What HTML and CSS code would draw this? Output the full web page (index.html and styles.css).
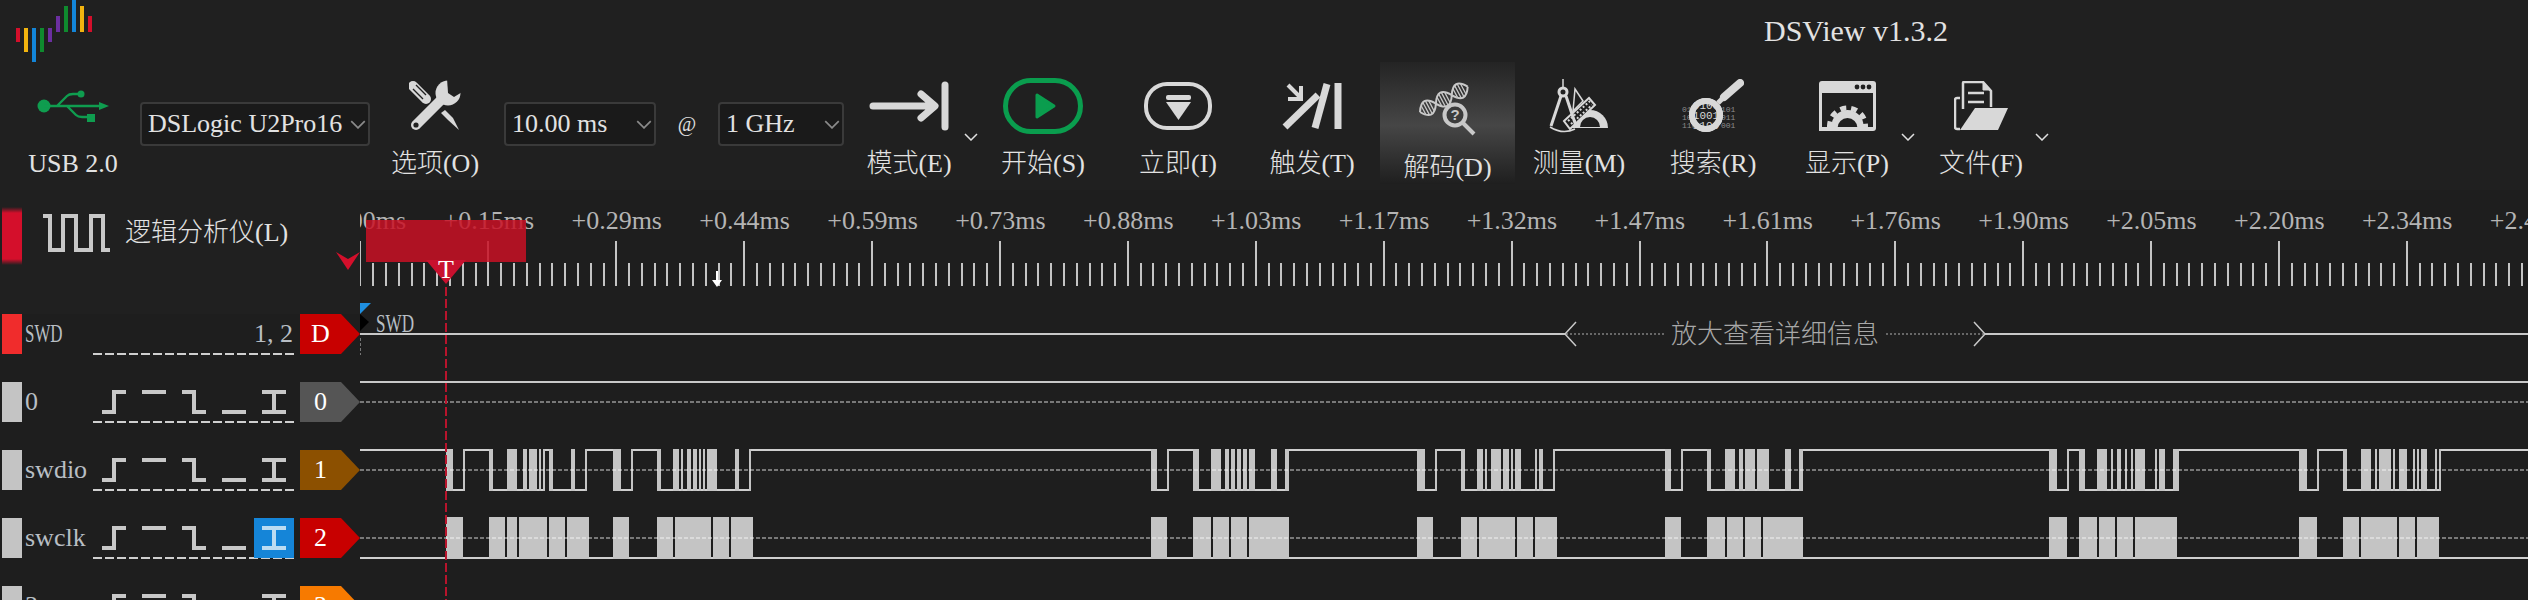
FILE: index.html
```html
<!DOCTYPE html>
<html lang="zh-CN">
<head>
  <meta charset="UTF-8">
  <title>DSView v1.3.2</title>
  <link rel="stylesheet" href="styles.css">
</head>
<body>
  <svg class="defs" width="0" height="0">
    <symbol id="trigRise" viewBox="0 0 24 24"><path d="M0 22H12V2H24"/></symbol>
    <symbol id="trigHigh" viewBox="0 0 24 24"><path d="M0 2H24"/></symbol>
    <symbol id="trigFall" viewBox="0 0 24 24"><path d="M0 2H12V22H24"/></symbol>
    <symbol id="trigLow" viewBox="0 0 24 24"><path d="M0 22H24"/></symbol>
    <symbol id="trigBoth" viewBox="0 0 24 24"><path d="M0 2H24M0 22H24M12 2V22"/></symbol>
    <symbol id="chevron" viewBox="0 0 14 8"><path d="M1 1L7 7L13 1"/></symbol>
  </svg>

  <header class="titlebar">
    <svg class="logo" width="76" height="62" viewBox="0 0 76 62">
      <rect x="0" y="28" width="4" height="14" fill="#d40f2b"/>
      <rect x="8" y="28" width="4" height="24" fill="#f2b40f"/>
      <rect x="16" y="28" width="4" height="34" fill="#1385d8"/>
      <rect x="24" y="28" width="4" height="24" fill="#0f8a2e"/>
      <rect x="32" y="28" width="4" height="14" fill="#6b2fa0"/>
      <rect x="40" y="16" width="4" height="16" fill="#6b2fa0"/>
      <rect x="48" y="6" width="4" height="26" fill="#0f8a2e"/>
      <rect x="56" y="0" width="4" height="32" fill="#1385d8"/>
      <rect x="64" y="6" width="4" height="26" fill="#f2b40f"/>
      <rect x="72" y="16" width="4" height="16" fill="#d40f2b"/>
    </svg>
    <h1 class="app-title">DSView v1.3.2</h1>
  </header>

  <nav class="toolbar">
    <div class="tool">
      <div class="tool-icon">
        <svg width="72" height="36" viewBox="0 0 72 36">
          <g fill="#0f9d4f">
            <circle cx="7" cy="18" r="6.5"/>
            <circle cx="44" cy="6" r="3.5"/>
            <rect x="50" y="26" width="8" height="8"/>
            <path d="M62 14L72 18L62 22Z"/>
          </g>
          <path d="M7 18H64M20 18L30 8Q32 6 36 6H44M30 18L39 27Q41 29 45 29H52" fill="none" stroke="#0f9d4f" stroke-width="2.4"/>
        </svg>
      </div>
      <span class="tool-label">USB 2.0</span>
    </div>

    <div class="combo combo-device"><span>DSLogic U2Pro16</span><svg class="combo-arrow"><use href="#chevron"/></svg></div>

    <div class="tool">
      <div class="tool-icon">
        <svg width="52" height="52" viewBox="0 0 52 52">
          <path d="M4 6L17 19" stroke="#d8d8d8" stroke-width="10" stroke-linecap="round"/>
          <path d="M4 9L14 19M7 5L17 15" stroke="#202020" stroke-width="1.4"/>
          <path d="M32 33L39 40L50 50L44 38L36 30Z" fill="#d8d8d8"/>
          <path d="M37 15L7 45" stroke="#d8d8d8" stroke-width="10" stroke-linecap="round"/>
          <circle cx="39" cy="13" r="12.5" fill="#d8d8d8"/>
          <path d="M39 13L38 -2L54 -2L53 12L45 17Z" fill="#202020"/>
          <circle cx="7" cy="45" r="2.6" fill="#202020"/>
        </svg>
      </div>
      <span class="tool-label">选项(O)</span>
    </div>

    <div class="combo combo-span"><span>10.00 ms</span><svg class="combo-arrow"><use href="#chevron"/></svg></div>
    <span class="at-sign">@</span>
    <div class="combo combo-rate"><span>1 GHz</span><svg class="combo-arrow"><use href="#chevron"/></svg></div>

    <div class="tool">
      <div class="tool-icon">
        <svg width="84" height="52" viewBox="0 0 84 52" fill="none" stroke="#d8d8d8" stroke-linecap="round" stroke-linejoin="round">
          <path d="M6 26H66M54 14L68 26L54 38" stroke-width="7"/>
          <path d="M78 5V47" stroke-width="7"/>
        </svg>
      </div>
      <span class="tool-label">模式(E)</span>
      <svg class="more"><use href="#chevron"/></svg>
    </div>

    <div class="tool">
      <div class="tool-icon">
        <svg width="80" height="56" viewBox="0 0 80 56">
          <rect x="2.5" y="2.5" width="75" height="51" rx="25.5" fill="none" stroke="#0a9d4e" stroke-width="5"/>
          <path d="M34 17L51 28L34 39Z" fill="#0a9d4e" stroke="#0a9d4e" stroke-width="3" stroke-linejoin="round"/>
        </svg>
      </div>
      <span class="tool-label">开始(S)</span>
    </div>

    <div class="tool">
      <div class="tool-icon">
        <svg width="68" height="48" viewBox="0 0 68 48">
          <rect x="2" y="2" width="64" height="44" rx="21" fill="none" stroke="#d8d8d8" stroke-width="4"/>
          <rect x="22" y="13" width="25" height="5" rx="2" fill="#d8d8d8"/>
          <path d="M22 20H47L34.500 38Z" fill="#d8d8d8"/>
        </svg>
      </div>
      <span class="tool-label">立即(I)</span>
    </div>

    <div class="tool">
      <div class="tool-icon">
        <svg width="60" height="48" viewBox="0 0 60 48" fill="none" stroke="#d8d8d8">
          <path d="M36 13L3 45" stroke-width="7"/>
          <path d="M45 2L33 46" stroke-width="7"/>
          <path d="M56 1V47" stroke-width="7"/>
          <path d="M6 3L18 15" stroke-width="4"/>
          <path d="M19 4V17H6" stroke-width="4"/>
        </svg>
      </div>
      <span class="tool-label">触发(T)</span>
    </div>

    <div class="tool tool-active">
      <div class="tool-icon">
        <svg width="58" height="56" viewBox="0 0 58 56" fill="none" stroke="#c8c8c8">
          <g transform="translate(1 32) rotate(-28)">
            <path d="M0 0Q9 -15 18 0T36 0T54 0M0 0Q9 15 18 0T36 0T54 0" stroke-width="2"/>
            <path d="M4 -5V5M7 -7V7M10 -7V7M13 -6V6M22 -5V5M25 -7V7M28 -7V7M31 -6V6M40 -5V5M43 -7V7M46 -7V7M49 -6V6" stroke-width="1.300"/>
          </g>
          <circle cx="36" cy="35" r="10.500" fill="#3c3c3c" stroke-width="4"/>
          <path d="M44 43L55 54" stroke-width="4"/>
          <text class="dna-mark" x="36" y="40" text-anchor="middle">?</text>
        </svg>
      </div>
      <span class="tool-label">解码(D)</span>
    </div>

    <div class="tool">
      <div class="tool-icon">
        <svg width="60" height="54" viewBox="0 0 60 54" fill="none" stroke="#d8d8d8">
          <path d="M23 49A18 18 0 0 1 59 49Z" fill="#d8d8d8" stroke="none"/>
          <path d="M31 48A10 10 0 0 1 51 48Z" fill="#202020" stroke="none"/>
          <path d="M15 42L40 19L46 26L21 50Z" fill="#202020" stroke-width="2"/>
          <path d="M19 42L41 22M22 45L43 26" stroke-width="2" stroke-dasharray="2 2"/>
          <path d="M26 10L34 22L24 32Z" stroke-width="1.500"/>
          <path d="M14 0V8" stroke-width="1.500"/>
          <circle cx="14" cy="13" r="4" stroke-width="3"/>
          <path d="M12 17L2 47M17 17L27 47" stroke-width="3"/>
          <path d="M1 48Q14 56 26 50" stroke-width="1.500"/>
        </svg>
      </div>
      <span class="tool-label">测量(M)</span>
    </div>

    <div class="tool">
      <div class="tool-icon">
        <svg width="62" height="54" viewBox="0 0 62 54" fill="none" stroke="#d8d8d8">
          <text class="bin-small" x="0" y="33">010</text>
          <text class="bin-small" x="0" y="41">100</text>
          <text class="bin-small" x="0" y="49">110</text>
          <text class="bin-small" x="39" y="33">101</text>
          <text class="bin-small" x="39" y="41">011</text>
          <text class="bin-small" x="39" y="49">001</text>
          <circle cx="24" cy="36" r="14" fill="#202020" stroke-width="6"/>
          <text class="bin-lens" x="24" y="30" text-anchor="middle">0100</text>
          <text class="bin-lens" x="24" y="40" text-anchor="middle">1001</text>
          <text class="bin-lens" x="24" y="50" text-anchor="middle">1100</text>
          <circle cx="24" cy="36" r="14" stroke-width="6"/>
          <path d="M36 24L42 18" stroke-width="5"/>
          <path d="M42 18L58 4" stroke-width="8" stroke-linecap="round"/>
        </svg>
      </div>
      <span class="tool-label">搜索(R)</span>
    </div>

    <div class="tool">
      <div class="tool-icon">
        <svg width="57" height="50" viewBox="0 0 57 50">
          <rect width="57" height="50" rx="3" fill="#d8d8d8"/>
          <rect x="3" y="12" width="51" height="34" fill="#202020"/>
          <circle cx="38" cy="6" r="2.400" fill="#202020"/>
          <circle cx="44" cy="6" r="2.400" fill="#202020"/>
          <circle cx="50" cy="6" r="2.400" fill="#202020"/>
          <circle cx="28.500" cy="45" r="16" fill="#d8d8d8"/>
          <circle cx="28.500" cy="45" r="18" fill="none" stroke="#d8d8d8" stroke-width="5" stroke-dasharray="6 5"/>
          <circle cx="28.500" cy="47" r="10" fill="#202020"/>
          <rect x="3" y="46" width="51" height="4" fill="#d8d8d8"/>
          <rect x="0" y="46" width="3" height="4" fill="#d8d8d8"/>
        </svg>
      </div>
      <span class="tool-label">显示(P)</span>
      <svg class="more"><use href="#chevron"/></svg>
    </div>

    <div class="tool tool-file">
      <div class="tool-icon">
        <svg width="54" height="50" viewBox="0 0 54 50" fill="none" stroke="#d8d8d8">
          <path d="M9 28V2Q9 1 10 1H29L37 10V26" stroke-width="2.500"/>
          <path d="M29 1V9H37Z" fill="#d8d8d8" stroke-width="1"/>
          <path d="M14 12H30M14 21H30" stroke-width="2.500"/>
          <path d="M6 17H3Q1 17 1 19V46Q1 48 3 48H6" stroke-width="2.500"/>
          <path d="M6 49L21 27H54L44 49Z" fill="#d8d8d8" stroke="none"/>
        </svg>
      </div>
      <span class="tool-label">文件(F)</span>
      <svg class="more"><use href="#chevron"/></svg>
    </div>
  </nav>

  <main class="view">
    <aside class="channels">
      <div class="mode-row">
        <div class="mode-bar"></div>
        <svg class="mode-icon" width="70" height="40" viewBox="0 0 70 40">
          <path d="M1 3H8V37H21V3H34V37H49V3H61V37H68" fill="none" stroke="#c8c8c8" stroke-width="4"/>
        </svg>
        <span class="mode-name">逻辑分析仪(L)</span>
        <svg class="mode-mark" width="24" height="18" viewBox="0 0 24 18">
          <path d="M0 0L12 7L24 0L12 18Z" fill="#d40f2b"/>
        </svg>
      </div>

      <div class="track">
        <div class="track-color color-decoder"></div>
        <div class="track-name"><span class="squeeze">SWD</span></div>
        <div class="trig-group trig-text">1, 2</div>
        <div class="tag tag-red">D</div>
      </div>

      <div class="track">
        <div class="track-color"></div>
        <div class="track-name">0</div>
        <div class="trig-group">
          <div class="trig"><svg><use href="#trigRise"/></svg></div>
          <div class="trig"><svg><use href="#trigHigh"/></svg></div>
          <div class="trig"><svg><use href="#trigFall"/></svg></div>
          <div class="trig"><svg><use href="#trigLow"/></svg></div>
          <div class="trig"><svg><use href="#trigBoth"/></svg></div>
        </div>
        <div class="tag tag-grey">0</div>
      </div>

      <div class="track">
        <div class="track-color"></div>
        <div class="track-name">swdio</div>
        <div class="trig-group">
          <div class="trig"><svg><use href="#trigRise"/></svg></div>
          <div class="trig"><svg><use href="#trigHigh"/></svg></div>
          <div class="trig"><svg><use href="#trigFall"/></svg></div>
          <div class="trig"><svg><use href="#trigLow"/></svg></div>
          <div class="trig"><svg><use href="#trigBoth"/></svg></div>
        </div>
        <div class="tag tag-brown">1</div>
      </div>

      <div class="track">
        <div class="track-color"></div>
        <div class="track-name">swclk</div>
        <div class="trig-group">
          <div class="trig"><svg><use href="#trigRise"/></svg></div>
          <div class="trig"><svg><use href="#trigHigh"/></svg></div>
          <div class="trig"><svg><use href="#trigFall"/></svg></div>
          <div class="trig"><svg><use href="#trigLow"/></svg></div>
          <div class="trig trig-on"><svg><use href="#trigBoth"/></svg></div>
        </div>
        <div class="tag tag-red">2</div>
      </div>

      <div class="track">
        <div class="track-color"></div>
        <div class="track-name">3</div>
        <div class="trig-group">
          <div class="trig"><svg><use href="#trigRise"/></svg></div>
          <div class="trig"><svg><use href="#trigHigh"/></svg></div>
          <div class="trig"><svg><use href="#trigFall"/></svg></div>
          <div class="trig"><svg><use href="#trigLow"/></svg></div>
          <div class="trig"><svg><use href="#trigBoth"/></svg></div>
        </div>
        <div class="tag tag-orange">3</div>
      </div>
    </aside>

    <section class="canvas">
      <div class="ruler-labels">
        <span>+0.00ms</span><span>+0.15ms</span><span>+0.29ms</span><span>+0.44ms</span><span>+0.59ms</span><span>+0.73ms</span>
        <span>+0.88ms</span><span>+1.03ms</span><span>+1.17ms</span><span>+1.32ms</span><span>+1.47ms</span><span>+1.61ms</span>
        <span>+1.76ms</span><span>+1.90ms</span><span>+2.05ms</span><span>+2.20ms</span><span>+2.34ms</span><span>+2.49ms</span>
      </div>

      <svg class="wave" id="wave" viewBox="360 190 2168 410" width="2168" height="410">
        <g id="ticks"></g>
        <path d="M716 271h2v9h4l-5 7l-5 -7h4z" fill="#fff"/>

        <path d="M360 303H371L360 314Z" fill="#1f8fe0"/>
        <path d="M360 314L369 322L360 331Z" fill="#000"/>
        <path d="M360.500 338V355" stroke="#777" stroke-dasharray="3 2"/>
        <text class="anno-name" x="376" y="332" textLength="38" lengthAdjust="spacingAndGlyphs">SWD</text>

        <path d="M360 334H1565M1985 334H2528M360 382H2528" stroke="#c8c8c8" stroke-width="2"/>
        <path d="M1576 322L1565 334L1576 346M1974 322L1985 334L1974 346" fill="none" stroke="#c8c8c8" stroke-width="1.500"/>
        <path d="M1566 334H1664M1886 334H1984" stroke="#b0b0b0" stroke-dasharray="2 2"/>
        <text class="anno-text" x="1775" y="343" text-anchor="middle">放大查看详细信息</text>

        <g id="signals"></g>
        <path d="M360 402H2528M360 470H2528M360 538H2528" stroke="#fff" stroke-opacity=".4" stroke-width="2" stroke-dasharray="4 2"/>
        <path d="M446 287V600" stroke="#b8142c" stroke-width="2" stroke-dasharray="9 3"/>
      </svg>

      <div class="cursor-band"></div>
      <div class="trig-mark">T</div>
    </section>
  </main>

  <script src="script.js"></script>
</body>
</html>
```

FILE: styles.css
```css
/* DSView main window */
body {
  width: 2528px;
  height: 600px;
  margin: 0;
  overflow: hidden;
  background-color: #202020;
  color: #e2e2e2;
  font-family: "Liberation Serif", "Noto Sans CJK SC", serif;
  font-size: 26px;
  font-weight: 300;
}

.defs {
  position: absolute;
}

symbol path {
  fill: none;
}

/* title */
.titlebar {
  display: flex;
  height: 62px;
  padding-left: 16px;
}

.logo {
  flex: none;
}

.app-title {
  margin: 0 0 0 1672px;
  font-size: 30px;
  font-weight: 400;
  line-height: 62px;
  white-space: nowrap;
}

/* toolbar */
.toolbar {
  display: grid;
  grid-template-columns: 114px 240px 130px 156px 62px 126px 130px 138px 132px 136px 135px 128px 140px 128px 140px;
  height: 128px;
  padding-left: 16px;
}

.tool {
  position: relative;
  display: flex;
  flex-direction: column;
  align-items: center;
}

.tool-icon {
  display: flex;
  flex: none;
  align-items: center;
  justify-content: center;
  height: 88px;
}

.tool-label {
  line-height: 28px;
  white-space: nowrap;
}

.tool-active {
  height: 122px;
  background: linear-gradient(#242424, #464646 52%, #1f1f1f);
}

.tool-active .tool-icon {
  height: 92px;
}

.more {
  position: absolute;
  top: 71px;
  right: -4px;
  width: 14px;
  height: 8px;
  fill: none;
  stroke: #e0e0e0;
  stroke-width: 1.5;
}

.tool-file .more {
  right: 2px;
}

.combo {
  display: flex;
  align-items: center;
  justify-content: space-between;
  box-sizing: border-box;
  height: 44px;
  margin-top: 40px;
  padding: 0 2px 0 6px;
  border: 2px solid #3a3a3a;
  border-radius: 4px;
  background-color: #1a1a1a;
  white-space: nowrap;
}

.combo-device {
  margin-left: 10px;
}

.combo-span {
  margin-left: 4px;
}

.combo-arrow {
  flex: none;
  width: 16px;
  height: 9px;
  fill: none;
  stroke: #8a8a8a;
  stroke-width: 1.5;
}

.at-sign {
  margin-top: 40px;
  font-size: 20px;
  line-height: 44px;
  text-align: center;
}

/* channel column */
.view {
  display: grid;
  grid-template-columns: 360px 1fr;
  height: 410px;
  background-color: #1e1e1e;
}

.channels {
  overflow: hidden;
}

.mode-row {
  display: flex;
  align-items: flex-start;
  box-sizing: border-box;
  height: 124px;
  padding: 17px 0 0 2px;
  background-color: #202020;
}

.mode-bar {
  width: 20px;
  height: 58px;
  background: linear-gradient(#202020, #d40f2b 6px, #d40f2b 52px, #202020);
}

.mode-icon {
  flex: none;
  margin: 6px 0 0 20px;
}

.mode-name {
  margin: 12px 0 0 13px;
  line-height: 28px;
  white-space: nowrap;
}

.mode-mark {
  flex: none;
  margin: 45px 0 0 auto;
}

.track {
  display: flex;
  height: 40px;
  margin-bottom: 28px;
  padding-left: 2px;
}

.track-color {
  flex: none;
  width: 20px;
  background-color: #c4c4c4;
}

.color-decoder {
  background-color: #f02c2c;
}

.track-name {
  flex: none;
  width: 69px;
  padding-left: 3px;
  color: #b8bec4;
  line-height: 40px;
}

.squeeze {
  display: inline-block;
  transform: scaleX(.65);
  transform-origin: left;
}

.trig-group {
  display: flex;
  flex: none;
  width: 202px;
  height: 41px;
  margin-left: -1px;
  padding-left: 1px;
  box-sizing: border-box;
  background: repeating-linear-gradient(90deg, #cfcfcf 0 9px, transparent 9px 12px) bottom / 100% 2px no-repeat;
}

.trig-text {
  justify-content: flex-end;
  padding-right: 2px;
  color: #b8bec4;
  line-height: 40px;
}

.trig {
  display: flex;
  align-items: center;
  justify-content: center;
  width: 40px;
  height: 40px;
}

.trig svg {
  width: 24px;
  height: 24px;
  fill: none;
  stroke: #c8c8c8;
  stroke-width: 4;
}

.trig-on {
  background-color: #1585d8;
}

.trig-on svg {
  stroke: #bcdcf2;
}

.tag {
  box-sizing: border-box;
  flex: none;
  width: 60px;
  height: 40px;
  margin-left: 5px;
  padding-right: 19px;
  color: #fff;
  line-height: 40px;
  text-align: center;
  clip-path: polygon(0 0, 41px 0, 100% 50%, 41px 100%, 0 100%);
}

.tag-red {
  background-color: #c80000;
}

.tag-grey {
  background-color: #555;
}

.tag-brown {
  background-color: #8c5000;
}

.tag-orange {
  background-color: #f77a00;
}

/* ruler and waveforms */
.canvas {
  position: relative;
  overflow: hidden;
}

.ruler-labels {
  display: flex;
  margin: 17px 0 0 -63px;
  color: #b4b4b4;
  line-height: 28px;
  white-space: nowrap;
}

.ruler-labels span {
  flex: none;
  width: 127.9px;
  text-align: center;
}

.wave {
  position: absolute;
  top: 0;
  left: 0;
}

.anno-name {
  fill: #b8bec4;
  font-size: 26px;
}

.anno-text {
  fill: #a8a8a8;
  font-size: 26px;
}

.dna-mark {
  fill: #c8c8c8;
  stroke: none;
  font-family: "Liberation Sans", sans-serif;
  font-size: 15px;
  font-weight: 700;
}

.bin-small {
  fill: #8c8c8c;
  stroke: none;
  font-family: "Liberation Mono", monospace;
  font-size: 8px;
}

.bin-lens {
  fill: #d8d8d8;
  stroke: none;
  font-family: "Liberation Mono", monospace;
  font-size: 11px;
}

.cursor-band {
  position: absolute;
  top: 30px;
  left: 6px;
  width: 160px;
  height: 42px;
  background-color: rgba(201, 17, 37, .85);
}

.trig-mark {
  position: absolute;
  top: 70px;
  left: 66px;
  width: 40px;
  height: 24px;
  background-color: #c8102e;
  color: #fff;
  line-height: 20px;
  text-align: center;
  clip-path: polygon(0 0, 100% 0, 50% 100%);
}
```

FILE: script.js
```js
// Ruler ticks and captured signals, in window pixels
const NS = 'http://www.w3.org/2000/svg';
const LEVEL_COLOR = '#cfcfcf';
const BLOCK_COLOR = '#c4c4c4';

function addRect(parent, x, y, w, h, fill) {
  const r = document.createElementNS(NS, 'rect');
  r.setAttribute('x', x);
  r.setAttribute('y', y);
  r.setAttribute('width', w);
  r.setAttribute('height', h);
  r.setAttribute('fill', fill);
  parent.appendChild(r);
}

const ticks = document.getElementById('ticks');
for (let i = 0; i < 170; i++) {
  const x = Math.floor(360 + i * 12.79);
  const major = i % 10 === 0;
  addRect(ticks, x, major ? 241 : 263, i === 0 ? 1 : 2, major ? 45 : 23, BLOCK_COLOR);
}

// each burst: low level between the ends, high level outside
const swdio = [
  [446, 453, 463, 465],
  [489, 493, 507, 517, 523, 527, 529, 537, 539, 541, 543, 545],
  [549, 553, 571, 575, 585, 587],
  [613, 621, 631, 633],
  [657, 661, 673, 679, 681, 683, 687, 691, 693, 697, 699, 701, 703, 705, 707, 717, 735, 739, 749, 751],
  [1151, 1157, 1167, 1169],
  [1193, 1199, 1211, 1221, 1225, 1229, 1231, 1235, 1237, 1241, 1243, 1247, 1249, 1255, 1271, 1277, 1285, 1289],
  [1417, 1425, 1435, 1437],
  [1461, 1465, 1477, 1483, 1485, 1487, 1491, 1501, 1503, 1509, 1511, 1513, 1515, 1521, 1535, 1537, 1539, 1543, 1553, 1555],
  [1665, 1671, 1681, 1683],
  [1707, 1711, 1725, 1735, 1739, 1743, 1745, 1755, 1757, 1769, 1785, 1791, 1799, 1803],
  [2049, 2057, 2067, 2069],
  [2079, 2085, 2097, 2107, 2111, 2113, 2117, 2121, 2125, 2127, 2131, 2133, 2135, 2145, 2155, 2157, 2159, 2165, 2173, 2179],
  [2299, 2307, 2317, 2319],
  [2343, 2347, 2361, 2371, 2375, 2377, 2379, 2391, 2393, 2395, 2399, 2407, 2413, 2415, 2417, 2419, 2421, 2427, 2435, 2437, 2439, 2441]
];

const swclk = [
  [446, 463], [489, 505], [507, 517], [519, 547], [549, 565], [567, 589], [613, 629],
  [657, 673], [675, 711], [713, 729], [731, 753], [1151, 1167], [1193, 1211], [1213, 1229],
  [1231, 1247], [1249, 1289], [1417, 1433], [1461, 1477], [1479, 1515], [1517, 1533],
  [1535, 1557], [1665, 1681], [1707, 1725], [1727, 1743], [1745, 1761], [1763, 1803],
  [2049, 2067], [2079, 2097], [2099, 2115], [2117, 2133], [2135, 2177], [2299, 2317],
  [2343, 2359], [2361, 2397], [2399, 2415], [2417, 2439]
];

const signals = document.getElementById('signals');

let pos = 360;
swdio.forEach(burst => {
  const end = burst[burst.length - 1];
  addRect(signals, pos, 449, burst[0] - pos, 2, LEVEL_COLOR);
  addRect(signals, burst[0], 489, end - burst[0], 2, LEVEL_COLOR);
  for (let i = 0; i < burst.length; i += 2) {
    addRect(signals, burst[i], 449, burst[i + 1] - burst[i], 42, BLOCK_COLOR);
  }
  pos = end;
});
addRect(signals, pos, 449, 2528 - pos, 2, LEVEL_COLOR);

addRect(signals, 360, 557, 2168, 2, LEVEL_COLOR);
swclk.forEach(([from, to]) => {
  addRect(signals, from, 517, to - from, 42, BLOCK_COLOR);
});
```
